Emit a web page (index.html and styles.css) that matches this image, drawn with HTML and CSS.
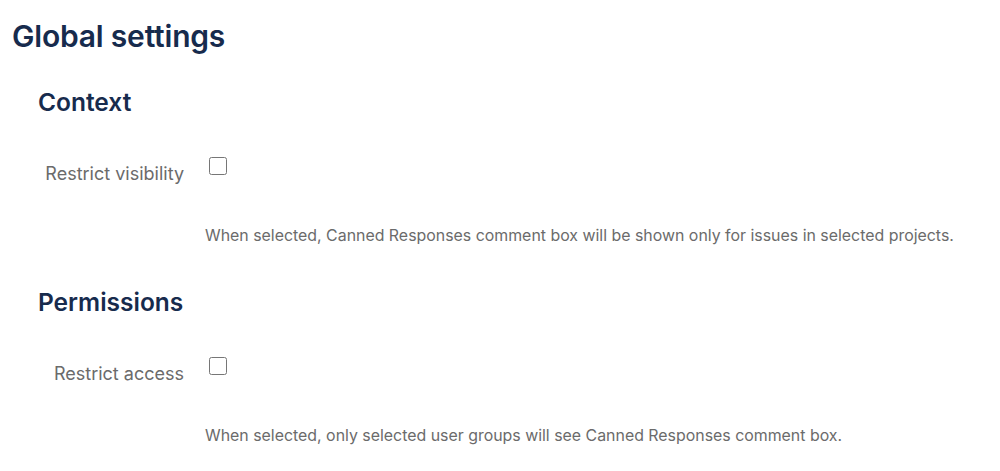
FILE: index.html
```html
<!DOCTYPE html>
<html lang="en">
<head>
<meta charset="utf-8">
<title>Global settings</title>
<link rel="stylesheet" href="styles.css">
</head>
<body>
<main class="page">
  <h1 class="page-title">Global settings</h1>

  <section class="group">
    <h2 class="group-title">Context</h2>
    <div class="field">
      <label class="field-label" for="restrict-visibility">Restrict visibility</label>
      <div class="field-control">
        <input type="checkbox" id="restrict-visibility" class="check">
        <p class="field-help">When selected, Canned Responses comment box will be shown only for issues in selected projects.</p>
      </div>
    </div>
  </section>

  <section class="group">
    <h2 class="group-title">Permissions</h2>
    <div class="field">
      <label class="field-label" for="restrict-access">Restrict access</label>
      <div class="field-control">
        <input type="checkbox" id="restrict-access" class="check">
        <p class="field-help">When selected, only selected user groups will see Canned Responses comment box.</p>
      </div>
    </div>
  </section>
</main>
</body>
</html>
```

FILE: styles.css
```css
html, body {
  margin: 0;
  padding: 0;
  background: #ffffff;
}

body {
  font-family: Inter, "Noto Sans", sans-serif;
  color: #172b4d;
}

.page {
  padding: 18px 0 0 12px;
}

.page-title {
  margin: 0;
  font-size: 30px;
  font-weight: 600;
  line-height: 36px;
  color: #172b4d;
  letter-spacing: -0.2px;
}

.group {
  padding-left: 26px;
}

.group-title {
  margin: 0;
  font-size: 24.5px;
  font-weight: 600;
  line-height: 30px;
  color: #172b4d;
}

.group:first-of-type .group-title {
  margin-top: 33px;
}

.group + .group .group-title {
  margin-top: 40px;
}

.field {
  display: flex;
  margin-top: 40px;
}

.field-label {
  width: 146px;
  flex: none;
  text-align: right;
  padding-top: 5px;
  font-size: 18px;
  line-height: 24px;
  color: #6b6b6b;
}

.field-control {
  padding-left: 21px;
}

.check {
  display: block;
  width: 18px;
  height: 18px;
  margin: 0 0 0 4px;
}

.field-help {
  margin: 50px 0 0;
  font-size: 15.9px;
  line-height: 22px;
  color: #6b6b6b;
}
```
